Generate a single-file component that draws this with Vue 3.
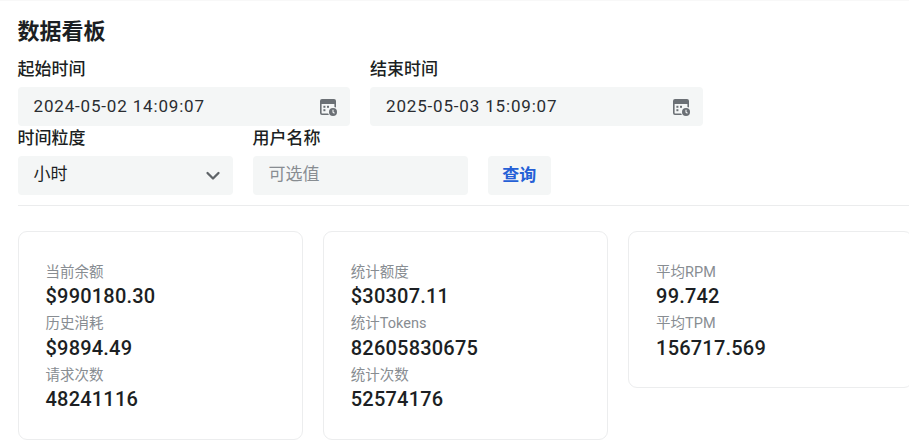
<script setup>
const rows = [
  [
    { field: '起始时间', value: '2024-05-02 14:09:07' },
    { field: '结束时间', value: '2025-05-03 15:09:07' },
  ],
];
const cards = [
  [
    { label: '当前余额', value: '$990180.30' },
    { label: '历史消耗', value: '$9894.49' },
    { label: '请求次数', value: '48241116' },
  ],
  [
    { label: '统计额度', value: '$30307.11' },
    { label: '统计Tokens', value: '82605830675' },
    { label: '统计次数', value: '52574176' },
  ],
  [
    { label: '平均RPM', value: '99.742' },
    { label: '平均TPM', value: '156717.569' },
  ],
];
</script>

<template>
  <div class="page">
    <h1 class="title">数据看板</h1>
    <div class="row">
      <div v-for="f in rows[0]" :key="f.field" class="field date">
        <label class="label">{{ f.field }}</label>
        <div class="input">
          <span class="text date-text">{{ f.value }}</span>
          <svg class="cal" viewBox="0 0 18 18" width="18" height="18">
            <path fill="#6b7075" fill-rule="evenodd" d="M3 1h12a2 2 0 0 1 2 2v6.6a5 5 0 0 0-1.6-.6V6H2.6v9a.4.4 0 0 0 .4.4h6.1c.2.6.5 1.1.9 1.6H3a2 2 0 0 1-2-2V3a2 2 0 0 1 2-2z"/>
            <rect x="4.4" y="7.8" width="2" height="2" fill="#6b7075"/>
            <rect x="8" y="7.8" width="2" height="2" fill="#6b7075"/>
            <rect x="4.4" y="11.2" width="2" height="2" fill="#6b7075"/>
            <circle cx="14" cy="14" r="4" fill="#6b7075"/>
            <path d="M14 11.8V14.2l1.5 1" fill="none" stroke="#f3f5f5" stroke-width="1.1"/>
          </svg>
        </div>
      </div>
    </div>
    <div class="row second">
      <div class="field short">
        <label class="label">时间粒度</label>
        <div class="input">
          <span class="text">小时</span>
          <svg class="chev" viewBox="0 0 16 10" width="16" height="10">
            <path d="M2.5 2l5.5 5.5L13.5 2" fill="none" stroke="#5f6468" stroke-width="2.3" stroke-linecap="round" stroke-linejoin="round"/>
          </svg>
        </div>
      </div>
      <div class="field short">
        <label class="label">用户名称</label>
        <div class="input">
          <span class="text placeholder">可选值</span>
        </div>
      </div>
      <button class="query" type="button">查询</button>
    </div>
    <div class="divider"></div>
    <div class="cards">
      <div v-for="(c, i) in cards" :key="i" class="card">
        <div v-for="s in c" :key="s.label" class="stat">
          <div class="stat-label">{{ s.label }}</div>
          <div class="stat-value">{{ s.value }}</div>
        </div>
      </div>
    </div>
  </div>
</template>

<style>
html, body { background: #fff; overflow: hidden; }
</style>

<style scoped>
.page {
  width: 909px;
  height: 448px;
  box-sizing: border-box;
  padding: 15px 0 0 17.5px;
  overflow: hidden;
  border-top: 1px solid #f8f8f8;
  font-family: Roboto, "Noto Sans CJK SC", sans-serif;
  color: #1c1f23;
}
.title {
  margin: 0;
  font-size: 22px;
  line-height: 26px;
  font-weight: 700;
  font-family: "Noto Sans CJK SC", sans-serif;
}
.row {
  display: flex;
  gap: 20px;
  margin-top: 15px;
}
.row.second {
  margin-top: 0;
  align-items: flex-end;
}
.field.date { width: 332.5px; }
.field.short { width: 215px; }
.label {
  display: block;
  font-size: 17px;
  line-height: 22px;
  font-weight: 500;
  margin-bottom: 8px;
  font-family: "Noto Sans CJK SC", sans-serif;
}
.input {
  height: 39px;
  box-sizing: border-box;
  padding: 0 12px 0 16px;
  background: #f4f6f6;
  border-radius: 4px;
  display: flex;
  align-items: center;
  justify-content: space-between;
}
.text {
  font-size: 17px;
  line-height: 24px;
  margin-bottom: 3px;
}
.date-text {
  letter-spacing: 0.83px;
  font-weight: 400;
  color: #2a2d31;
  margin-bottom: 2px;
}
.placeholder { color: #888d92; }
.cal { margin-right: 1px; margin-top: 1px; }
.chev { margin-right: 0; }
.query {
  width: 63.5px;
  height: 39px;
  border: 0;
  border-radius: 4px;
  background: #f4f6f6;
  color: #2560d6;
  font: 600 17px "Noto Sans CJK SC", sans-serif;
  padding: 0 0 5px;
}
.divider {
  height: 1px;
  background: #ebeced;
  margin-top: 10px;
}
.cards {
  display: flex;
  gap: 20px;
  margin-top: 25px;
  align-items: flex-start;
  width: 960px;
}
.card {
  flex: none;
  width: 285.3px;
  box-sizing: border-box;
  padding: 29.5px 27px 22.5px 27px;
  border: 1px solid #ecedee;
  border-radius: 9px;
  background: #fff;
}
.stat-label {
  font-size: 14.5px;
  line-height: 22.5px;
  color: #888d92;
}
.stat-value {
  font-size: 20px;
  line-height: 24px;
  margin-bottom: 5px;
  font-weight: 500;
  letter-spacing: 0.2px;
}
</style>
